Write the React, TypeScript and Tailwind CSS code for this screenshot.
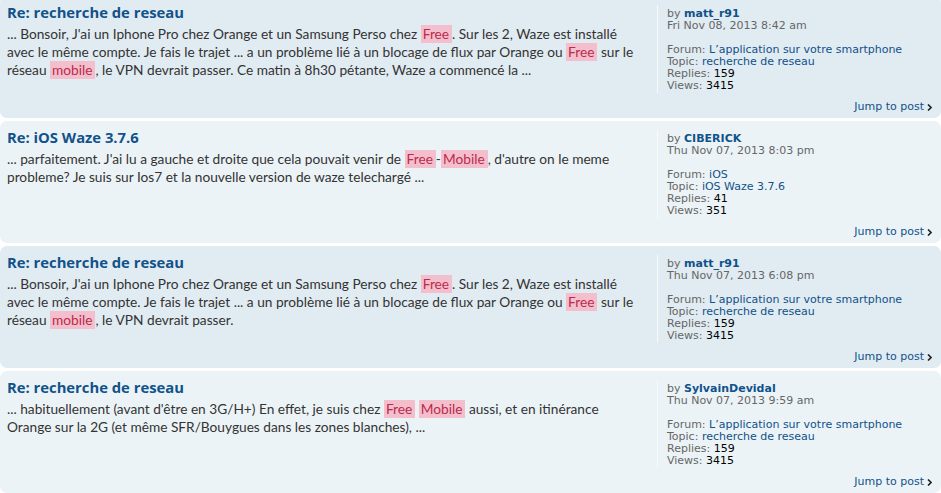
type Part = string | { hl: string };

type Result = {
  title: string;
  lines: Part[][];
  author: string;
  date: string;
  forum: string;
  topic: string;
  replies: number;
  views: number;
  alt: boolean;
};

const results: Result[] = [
  {
    title: 'Re: recherche de reseau',
    lines: [
      ['... Bonsoir, J\'ai un Iphone Pro chez Orange et un Samsung Perso chez ', { hl: 'Free' }, '. Sur les 2, Waze est installé'],
      ['avec le même compte. Je fais le trajet ... a un problème lié à un blocage de flux par Orange ou ', { hl: 'Free' }, ' sur le'],
      ['réseau ', { hl: 'mobile' }, ', le VPN devrait passer. Ce matin à 8h30 pétante, Waze a commencé la ...'],
    ],
    author: 'matt_r91',
    date: 'Fri Nov 08, 2013 8:42 am',
    forum: 'L’application sur votre smartphone',
    topic: 'recherche de reseau',
    replies: 159,
    views: 3415,
    alt: true,
  },
  {
    title: 'Re: iOS Waze 3.7.6',
    lines: [
      ['... parfaitement. J\'ai lu a gauche et droite que cela pouvait venir de ', { hl: 'Free' }, '-', { hl: 'Mobile' }, ', d\'autre on le meme'],
      ['probleme? Je suis sur Ios7 et la nouvelle version de waze telechargé ...'],
    ],
    author: 'CIBERICK',
    date: 'Thu Nov 07, 2013 8:03 pm',
    forum: 'iOS',
    topic: 'iOS Waze 3.7.6',
    replies: 41,
    views: 351,
    alt: false,
  },
  {
    title: 'Re: recherche de reseau',
    lines: [
      ['... Bonsoir, J\'ai un Iphone Pro chez Orange et un Samsung Perso chez ', { hl: 'Free' }, '. Sur les 2, Waze est installé'],
      ['avec le même compte. Je fais le trajet ... a un problème lié à un blocage de flux par Orange ou ', { hl: 'Free' }, ' sur le'],
      ['réseau ', { hl: 'mobile' }, ', le VPN devrait passer.'],
    ],
    author: 'matt_r91',
    date: 'Thu Nov 07, 2013 6:08 pm',
    forum: 'L’application sur votre smartphone',
    topic: 'recherche de reseau',
    replies: 159,
    views: 3415,
    alt: true,
  },
  {
    title: 'Re: recherche de reseau',
    lines: [
      ['... habituellement (avant d\'être en 3G/H+) En effet, je suis chez ', { hl: 'Free' }, ' ', { hl: 'Mobile' }, ' aussi, et en itinérance'],
      ['Orange sur la 2G (et même SFR/Bouygues dans les zones blanches), ...'],
    ],
    author: 'SylvainDevidal',
    date: 'Thu Nov 07, 2013 9:59 am',
    forum: 'L’application sur votre smartphone',
    topic: 'recherche de reseau',
    replies: 159,
    views: 3415,
    alt: false,
  },
];

function Arrow() {
  return (
    <svg width="5" height="7" viewBox="0 0 5 7" className="ml-[3px] inline-block">
      <path d="M1 0.5 L4 3.5 L1 6.5" fill="none" stroke="#222" strokeWidth="1.6" />
    </svg>
  );
}

function ResultRow({ r }: { r: Result }) {
  return (
    <div className={`mb-[3px] rounded-[7px] pt-[9px] pb-[5px] ${r.alt ? 'bg-[#e1ebf2]' : 'bg-[#ecf3f7]'}`}>
      <div className="flex">
        <div className="flex-1 pl-[7px]">
          <h3 className="-mt-[2px] font-['Open_Sans',sans-serif] text-[14.8px] font-bold leading-[18px] text-[#105289]">
            {r.title}
          </h3>
          <div className="mt-[4px] font-['Lato',sans-serif] text-[13.7px] leading-[18px] text-[#333333]">
            {r.lines.map((line, i) => (
              <div key={i} className="whitespace-pre">
                {line.map((p, j) =>
                  typeof p === 'string' ? (
                    <span key={j}>{p}</span>
                  ) : (
                    <span key={j} className="inline-block bg-[#f3bfcc] pl-[2px] pr-[3px] text-[#bc2a4d]">
                      {p.hl}
                    </span>
                  )
                )}
              </div>
            ))}
          </div>
        </div>
        <div className="w-[284px] shrink-0 border-l border-[#f7fafc] pt-[3px] pb-[1px] pl-[9px] font-['DejaVu_Sans',sans-serif] text-[11px] leading-[12px] text-[#666666]">
          <div>
            by <span className="font-bold text-[#105289]">{r.author}</span>
          </div>
          <div>{r.date}</div>
          <div className="mt-[12px]">
            Forum: <span className="text-[#105289]">{r.forum}</span>
          </div>
          <div>
            Topic: <span className="text-[#105289]">{r.topic}</span>
          </div>
          <div>
            Replies: <span className="text-black">{r.replies}</span>
          </div>
          <div>
            Views: <span className="text-black">{r.views}</span>
          </div>
        </div>
      </div>
      <div className="mt-[8px] flex items-center justify-end pr-[9px] font-['DejaVu_Sans',sans-serif] text-[11px] leading-[12px] text-[#105289]">
        Jump to post
        <Arrow />
      </div>
    </div>
  );
}

export default function App() {
  return (
    <div className="h-[493px] w-[941px] overflow-hidden bg-white">
      <div className="-mt-[4px]">
        {results.map((r, i) => (
          <ResultRow key={i} r={r} />
        ))}
      </div>
    </div>
  );
}
